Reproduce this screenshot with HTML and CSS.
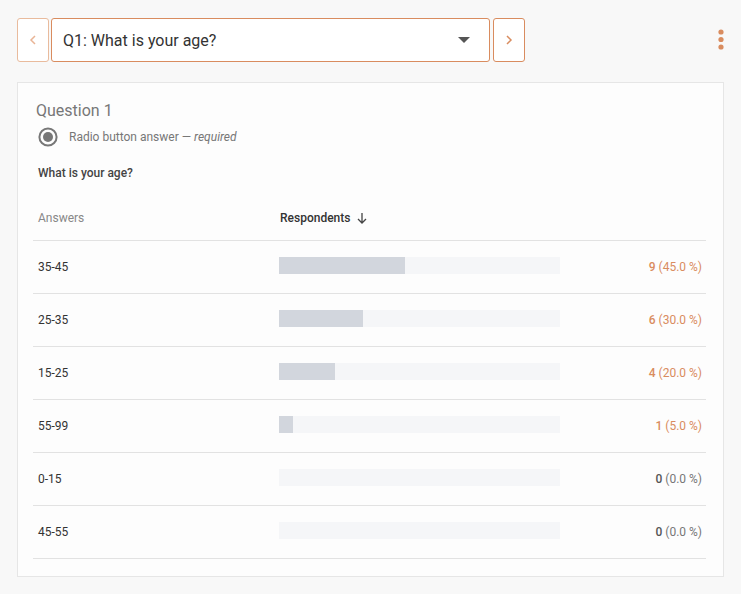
FILE: index.html
```html
<!DOCTYPE html>
<html lang="en">
<head>
    <meta charset="UTF-8">
    <meta name="viewport" content="width=device-width, initial-scale=1.0">
    <title>Question results</title>
    <link rel="stylesheet" href="styles.css">
</head>
<body>

<div class="toolbar">
    <button class="nav-btn nav-prev">
        <svg width="8" height="10" viewBox="0 0 8 10"><path d="M6 1 L2 5 L6 9" fill="none" stroke="currentColor" stroke-width="1.5"/></svg>
    </button>
    <div class="picker">
        <span>Q1: What is your age?</span>
        <svg width="12" height="6" viewBox="0 0 12 6"><path d="M0 0 H12 L6 6 Z" fill="#555"/></svg>
    </div>
    <button class="nav-btn nav-next">
        <svg width="8" height="10" viewBox="0 0 8 10"><path d="M2 1 L6 5 L2 9" fill="none" stroke="currentColor" stroke-width="1.5"/></svg>
    </button>
    <div class="kebab">
        <svg width="6" height="22" viewBox="0 0 6 22"><circle cx="3" cy="3" r="2.6"/><circle cx="3" cy="10.5" r="2.6"/><circle cx="3" cy="18" r="2.6"/></svg>
    </div>
</div>

<div class="card">
    <div class="q-title">Question 1</div>
    <div class="q-type">
        <svg width="20" height="20" viewBox="0 0 20 20"><circle cx="10" cy="10" r="8.6" fill="none" stroke="#777" stroke-width="2"/><circle cx="10" cy="10" r="5" fill="#777"/></svg>
        <span>Radio button answer — <i>required</i></span>
    </div>
    <div class="q-text">What is your age?</div>

    <div class="results">
        <div class="row head">
            <div class="col-answer">Answers</div>
            <div class="col-resp">Respondents
                <svg width="12" height="12" viewBox="0 0 12 12"><path d="M6 1 V11 M2 7 L6 11 L10 7" fill="none" stroke="#444" stroke-width="1.3"/></svg>
            </div>
            <div></div>
        </div>
        <div class="row">
            <div>35-45</div>
            <div class="bar"><div class="fill" style="width:45%"></div></div>
            <div class="count hit"><b>9</b> (45.0 %)</div>
        </div>
        <div class="row">
            <div>25-35</div>
            <div class="bar"><div class="fill" style="width:30%"></div></div>
            <div class="count hit"><b>6</b> (30.0 %)</div>
        </div>
        <div class="row">
            <div>15-25</div>
            <div class="bar"><div class="fill" style="width:20%"></div></div>
            <div class="count hit"><b>4</b> (20.0 %)</div>
        </div>
        <div class="row">
            <div>55-99</div>
            <div class="bar"><div class="fill" style="width:5%"></div></div>
            <div class="count hit"><b>1</b> (5.0 %)</div>
        </div>
        <div class="row">
            <div>0-15</div>
            <div class="bar"><div class="fill" style="width:0%"></div></div>
            <div class="count"><b>0</b> (0.0 %)</div>
        </div>
        <div class="row">
            <div>45-55</div>
            <div class="bar"><div class="fill" style="width:0%"></div></div>
            <div class="count"><b>0</b> (0.0 %)</div>
        </div>
    </div>
</div>

</body>
</html>
```

FILE: styles.css
```css
body {
    font-family: Roboto, "Liberation Sans", sans-serif;
    background-color: #f8f8f8;
    margin: 0;
    padding: 18px 18px 0 17px;
    color: #333;
}
.toolbar {
    display: flex;
    align-items: center;
    gap: 2px;
    height: 44px;
    margin-bottom: 20px;
}
.nav-btn {
    width: 32px;
    height: 44px;
    padding: 0;
    background-color: #fff;
    border: 1px solid #d98c5f;
    border-radius: 3px;
    color: #d98c5f;
    display: flex;
    align-items: center;
    justify-content: center;
    cursor: pointer;
}
.nav-prev {
    border-color: #e9bb9d;
    color: #e9b495;
}
.nav-next {
    margin-left: 1px;
}
.picker {
    width: 439px;
    height: 44px;
    box-sizing: border-box;
    background-color: #fff;
    border: 1px solid #d98c5f;
    border-radius: 3px;
    display: flex;
    align-items: center;
    justify-content: space-between;
    padding: 0 19px 0 11px;
    font-size: 16px;
    color: #333;
}
.kebab {
    margin-left: auto;
    margin-right: -1px;
    display: flex;
    fill: #d98c5f;
}
.card {
    background-color: #fdfdfd;
    border: 1px solid #e6e6e6;
    padding: 18px 17px 17px 15px;
    width: 673px;
}
.q-title {
    font-size: 16px;
    color: #777;
    margin-left: 3px;
    line-height: 20px;
}
.q-type {
    display: flex;
    align-items: center;
    gap: 11px;
    margin: 6px 0 0 5px;
    font-size: 12px;
    color: #777;
}
.q-type svg {
    display: block;
}
.q-text {
    font-size: 12px;
    font-weight: 500;
    color: #444;
    margin: 19px 0 0 5px;
}
.results {
    margin-top: 15px;
}
.row {
    display: grid;
    grid-template-columns: 241px 281px 1fr;
    align-items: center;
    height: 52px;
    padding: 0 4px 0 5px;
    border-bottom: 1px solid #e2e2e2;
    font-size: 12px;
    color: #333;
}
.row.head {
    height: 45px;
}
.col-answer {
    color: #888;
}
.col-resp {
    font-weight: 500;
    display: flex;
    align-items: center;
    gap: 6px;
    margin-left: 1px;
}
.bar {
    height: 17px;
    margin-bottom: 3px;
    background-color: #f5f6f8;
}
.fill {
    height: 100%;
    background-color: #d2d6dd;
}
.count {
    text-align: right;
    color: #777;
}
.count b {
    font-weight: 500;
    color: #555;
}
.count.hit, .count.hit b {
    color: #d98c5f;
}
```
